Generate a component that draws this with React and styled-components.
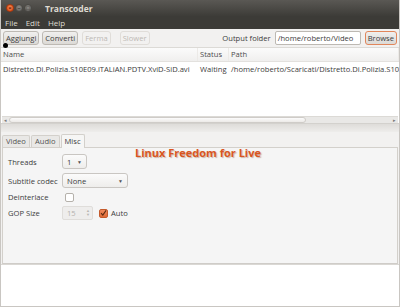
import React from "react";
import styled, { createGlobalStyle } from "styled-components";

const Global = createGlobalStyle`
  html, body { margin: 0; padding: 0; background: #ffffff; }
  body { font-family: "Open Sans", "Noto Sans", sans-serif; font-size: 7.6px; color: #3c3c3c; }
  * { box-sizing: border-box; }
`;

const Window = styled.div`
  position: relative;
  width: 400px;
  height: 307px;
  display: flex;
  flex-direction: column;
  border-left: 1px solid #c9c6c2;
  border-right: 1px solid #c9c6c2;
  border-bottom: 1px solid #c9c6c2;
  overflow: hidden;
  background: #f2f1f0;
`;

const TitleBar = styled.div`
  height: 16px;
  display: flex;
  align-items: center;
  padding-left: 6px;
  background: linear-gradient(#5a5854, #3d3c38);
  margin: 0 -1px;
`;

const WinButton = styled.span`
  width: 8px;
  height: 8px;
  border-radius: 50%;
  margin-right: 1px;
  background: ${p => (p.$close ? "radial-gradient(circle at 50% 40%, #f58a54, #df4a13)" : "radial-gradient(circle at 50% 40%, #8a8884, #5f5d59)")};
  border: 1px solid ${p => (p.$close ? "#a8360c" : "#4a4844")};
  display: flex;
  align-items: center;
  justify-content: center;
  color: ${p => (p.$close ? "#5a1a05" : "#3a3935")};
  font-size: 6px;
  line-height: 1;
  font-weight: bold;
`;

const Title = styled.span`
  margin-left: 12px;
  color: #dfdbd2;
  font-weight: bold;
  font-size: 8.5px;
`;

const MenuBar = styled.div`
  height: 13px;
  display: flex;
  align-items: center;
  gap: 8px;
  padding-left: 5px;
  background: #3c3b37;
  color: #dfdbd2;
  margin: 0 -1px;
  font-size: 8px;
`;

const Toolbar = styled.div`
  height: 18px;
  display: flex;
  align-items: center;
  padding: 0 2px;
  gap: 3px;
  background: #f2f1f0;
`;

const Button = styled.button`
  height: 14px;
  padding: 0 2px;
  font-family: inherit;
  font-size: 7.6px;
  border-radius: 3px;
  border: 1px solid ${p => (p.disabled ? "#e0ddd9" : p.$focus ? "#e1865b" : "#bdb9b3")};
  background: ${p => (p.disabled ? "#f2f1f0" : "linear-gradient(#f0efee, #dcdad6)")};
  color: ${p => (p.disabled ? "#bdb9b4" : "#3c3c3c")};
  margin-left: ${p => p.$gap || 0}px;
  line-height: 12px;
`;

const Label = styled.span`
  margin-left: auto;
  color: #3c3c3c;
`;

const Input = styled.div`
  width: 86px;
  height: 14px;
  border: 1px solid #bdb9b3;
  border-radius: 2px;
  background: #fff;
  padding-left: 2px;
  line-height: 12px;
  margin-left: 1px;
`;

const Tree = styled.div`
  height: 76px;
  background: #ffffff;
  display: flex;
  flex-direction: column;
  border-top: 1px solid #dcdad6;
`;

const HeaderRow = styled.div`
  height: 14px;
  display: grid;
  grid-template-columns: 197px 31px 1fr;
  background: linear-gradient(#fbfbfb, #f0efee);
  border-bottom: 1px solid #e3e1de;
`;

const HeadCell = styled.div`
  padding-left: 2px;
  line-height: 13px;
  border-right: 1px solid #eceae7;
  color: #4c4c4c;
`;

const Row = styled.div`
  height: 14px;
  display: grid;
  grid-template-columns: 197px 31px 1fr;
`;

const Cell = styled.div`
  padding-left: 2px;
  line-height: 14px;
  white-space: nowrap;
  overflow: hidden;
`;

const Spacer = styled.div`
  flex: 1;
`;

const HScroll = styled.div`
  height: 7px;
  margin: 0 1px 0 1px;
  display: flex;
  align-items: center;
  background: #e9e8e6;
  border-top: 1px solid #dcdad6;
`;

const Arrow = styled.span`
  width: 7px;
  font-size: 5px;
  color: #777;
  text-align: center;
  line-height: 6px;
`;

const Thumb = styled.div`
  width: 297px;
  height: 6px;
  border-radius: 3px;
  border: 1px solid #cfccc8;
  background: linear-gradient(#fcfcfc, #eceae7);
`;

const Handle = styled.div`
  height: 9px;
  background: linear-gradient(#dedcd9, #eeedeb);
  border-top: 1px solid #d3d1cd;
`;

const Tabs = styled.div`
  height: 15px;
  display: flex;
  align-items: flex-end;
  padding-left: 1px;
  gap: 1px;
`;

const Tab = styled.div`
  height: ${p => (p.$active ? 14 : 12)}px;
  padding: 0 3px;
  line-height: ${p => (p.$active ? 13 : 11)}px;
  border: 1px solid #d3d0cb;
  border-bottom: none;
  border-radius: 2px 2px 0 0;
  background: ${p => (p.$active ? "#f6f6f5" : "#e9e8e6")};
  color: ${p => (p.$active ? "#3c3c3c" : "#555")};
  margin-bottom: ${p => (p.$active ? -1 : 0)}px;
  position: relative;
`;

const Page = styled.div`
  height: 117px;
  background: #f5f5f5;
  border: 1px solid #d3d0cb;
  border-bottom-color: #cfccc8;
  margin: 0 1px;
  padding: 6px 0 0 5px;
  display: grid;
  grid-template-columns: 54px 1fr;
  grid-auto-rows: min-content;
  row-gap: 4px;
  align-items: center;
`;

const FieldLabel = styled.span`
  color: #3c3c3c;
`;

const Field = styled.div`
  display: flex;
  align-items: center;
  gap: 3px;
`;

const Combo = styled.div`
  width: ${p => p.$w}px;
  height: 15px;
  border: 1px solid #c9c6c2;
  border-radius: 3px;
  background: linear-gradient(#fbfbfb, #eeedeb);
  display: flex;
  align-items: center;
  justify-content: space-between;
  padding: 0 4px;
`;

const Caret = styled.span`
  font-size: 5px;
  color: #555;
`;

const Check = styled.div`
  width: 9px;
  height: 9px;
  margin-left: 3px;
  border: 1px solid ${p => (p.$on ? "#c45a2c" : "#b5b1ab")};
  border-radius: 2px;
  background: ${p => (p.$on ? "linear-gradient(#f08a5d, #de6a36)" : "#ffffff")};
  display: flex;
  align-items: center;
  justify-content: center;
`;

const Spin = styled.div`
  width: 31px;
  height: 14px;
  border: 1px solid #dfddda;
  border-radius: 2px;
  background: #eeedec;
  color: #b5b2ae;
  display: flex;
  align-items: center;
  justify-content: space-between;
  padding: 0 2px 0 4px;
`;

const SpinArrows = styled.span`
  display: flex;
  flex-direction: column;
  font-size: 4px;
  line-height: 4px;
  color: #b8b5b1;
`;

const Bottom = styled.div`
  flex: 1;
  background: #ffffff;
  border-top: 1px solid #dad8d4;
`;

const Dot = styled.span`
  position: absolute;
  left: 2px;
  top: 43px;
  width: 5px;
  height: 5px;
  border-radius: 50%;
  background: #000;
`;

const Watermark = styled.span`
  position: absolute;
  left: 134px;
  top: 145px;
  font-family: "Open Sans", sans-serif;
  font-weight: bold;
  font-size: 11px;
  color: #d9561f;
  text-shadow: 1px 1px 1px rgba(120, 60, 30, 0.35);
`;

export default function App() {
  return (
    <>
      <Global />
      <Window>
        <TitleBar>
          <WinButton $close>×</WinButton>
          <WinButton>–</WinButton>
          <WinButton>□</WinButton>
          <Title>Transcoder</Title>
        </TitleBar>
        <MenuBar>
          <span>File</span>
          <span>Edit</span>
          <span>Help</span>
        </MenuBar>
        <Toolbar>
          <Button>Aggiungi</Button>
          <Button>Converti</Button>
          <Button disabled $gap={1}>Ferma</Button>
          <Button disabled $gap={6}>Slower</Button>
          <Label>Output folder</Label>
          <Input>/home/roberto/Video</Input>
          <Button $focus $gap={1}>Browse</Button>
        </Toolbar>
        <Tree>
          <HeaderRow>
            <HeadCell>Name</HeadCell>
            <HeadCell>Status</HeadCell>
            <HeadCell>Path</HeadCell>
          </HeaderRow>
          <Row>
            <Cell>Distretto.Di.Polizia.S10E09.iTALiAN.PDTV.XviD-SiD.avi</Cell>
            <Cell>Waiting</Cell>
            <Cell>/home/roberto/Scaricati/Distretto.Di.Polizia.S10E09.iTALiAN.PDTV.XviD-SiD.avi</Cell>
          </Row>
          <Spacer />
          <HScroll>
            <Arrow>◂</Arrow>
            <Thumb />
            <Spacer />
            <Arrow>▸</Arrow>
          </HScroll>
        </Tree>
        <Handle />
        <Tabs>
          <Tab>Video</Tab>
          <Tab>Audio</Tab>
          <Tab $active>Misc</Tab>
        </Tabs>
        <Page>
          <FieldLabel>Threads</FieldLabel>
          <Field>
            <Combo $w={25}>1<Caret>▼</Caret></Combo>
          </Field>
          <FieldLabel>Subtitle codec</FieldLabel>
          <Field>
            <Combo $w={66}>None<Caret>▼</Caret></Combo>
          </Field>
          <FieldLabel>Deinterlace</FieldLabel>
          <Field>
            <Check />
          </Field>
          <FieldLabel>GOP Size</FieldLabel>
          <Field>
            <Spin>15<SpinArrows><span>▲</span><span>▼</span></SpinArrows></Spin>
            <Check $on>
              <svg width="8" height="8" viewBox="0 0 8 8">
                <path d="M1.2 4.2 L3.2 6.4 L7 1" fill="none" stroke="#5a2a12" strokeWidth="1.2" />
              </svg>
            </Check>
            <span>Auto</span>
          </Field>
        </Page>
        <Bottom />
        <Dot />
        <Watermark>Linux Freedom for Live</Watermark>
      </Window>
    </>
  );
}
